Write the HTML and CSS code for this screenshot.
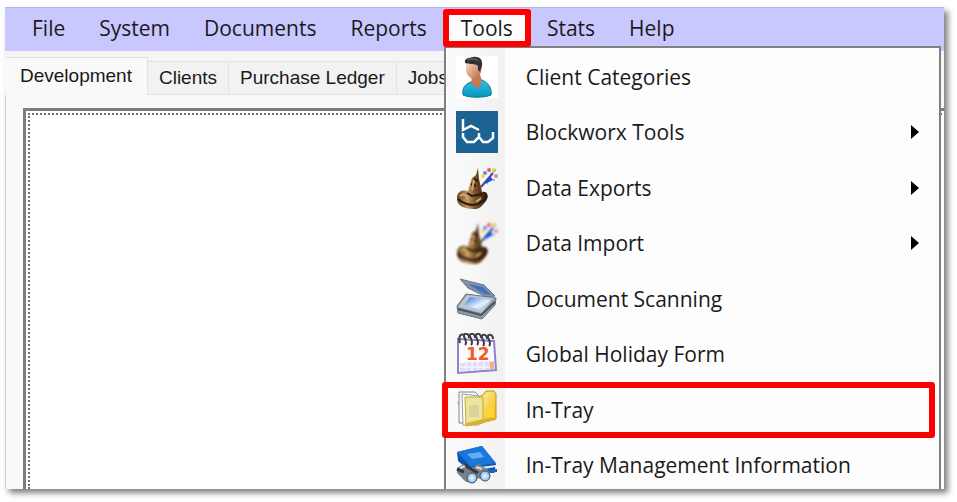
FILE: index.html
```
<!DOCTYPE html>
<html lang="en">
<head>
    <meta charset="UTF-8">
    <meta name="viewport" content="width=device-width, initial-scale=1.0">
    <title>Development</title>
    <link rel="stylesheet" href="styles.css">
</head>
<body>
    <div class="window">
        <nav class="menubar">
            <div class="menu"><button class="menu-button">File</button></div>
            <div class="menu"><button class="menu-button">System</button></div>
            <div class="menu"><button class="menu-button">Documents</button></div>
            <div class="menu"><button class="menu-button">Reports</button></div>
            <div class="menu open">
                <button class="menu-button highlight" aria-expanded="true">Tools</button>
                <div class="dropdown">
                    <button class="item">
                        <svg class="icon" viewBox="0 0 42 42">
                            <defs>
                                <linearGradient id="skin" x1="0" y1="0" x2="1" y2="1">
                                    <stop offset="0" stop-color="#ffe3cf"/>
                                    <stop offset="1" stop-color="#b5633c"/>
                                </linearGradient>
                                <linearGradient id="shirt" x1="0" y1="0" x2="0" y2="1">
                                    <stop offset="0" stop-color="#35bfe6"/>
                                    <stop offset="1" stop-color="#0694bd"/>
                                </linearGradient>
                            </defs>
                            <rect width="42" height="42" fill="#fff"/>
                            <path d="M7 39 C6 32 9 28 15 26 L26 24 C32 27 36 31 35 39 C28 42 13 42 7 39 Z" fill="url(#shirt)" stroke="#087896" stroke-width="1"/>
                            <path d="M16 20 L15 27 L23 33 L26 24 L24 19 Z" fill="#c9794f"/>
                            <path d="M10 6 C14 3 22 3 25 8 C26 14 25 20 20 23 C15 24 10 19 10 14 Z" fill="url(#skin)"/>
                            <path d="M9 7 C8 2 13 2 17 1 C24 0 27 4 26 10 L24 16 L22 14 L22 10 C19 7 14 9 9 7 Z" fill="#303437"/>
                            <path d="M12 4 C16 2 20 3 22 5" fill="none" stroke="#74797c" stroke-width="1"/>
                        </svg>
                        <span>Client Categories</span>
                    </button>
                    <button class="item has-submenu">
                        <svg class="icon" viewBox="0 0 42 42">
                            <rect width="42" height="42" fill="#1c6293"/>
                            <path d="M7 8 V19 L15 15 L23 19 M7 22 V26 L11 31 H18 L23 26 V22 M23 26 L27 31 H32 L37 27 V21" fill="none" stroke="#fff" stroke-width="2.5"/>
                        </svg>
                        <span>Blockworx Tools</span>
                    </button>
                    <button class="item has-submenu">
                        <svg class="icon" viewBox="0 0 42 42">
                            <defs>
                                <linearGradient id="felt" x1="0" y1="0" x2="1" y2="0">
                                    <stop offset="0" stop-color="#69451e"/>
                                    <stop offset="0.35" stop-color="#c59a61"/>
                                    <stop offset="0.6" stop-color="#76502a"/>
                                    <stop offset="1" stop-color="#2b1809"/>
                                </linearGradient>
                                <g id="hat">
                                    <path d="M1 30 C2 23 8 23 12 24 L16 11 L20 8 L22 1 L23 12 L26 25 C32 24 33 29 30 34 C26 39 23 43 17 42 C10 42 0 40 1 30 Z" fill="url(#felt)"/>
                                    <path d="M2 32 C6 36 13 38 17 38 C23 38 28 33 31 29 M11 26 L16 29 L26 27 M18 12 L22 14 M15 17 L20 19" fill="none" stroke="#2d1908" stroke-width="2"/>
                                    <path d="M4 29 C8 26 10 28 12 32 M16 23 L18 13 M20 35 L25 31" fill="none" stroke="#d1a76c" stroke-width="2"/>
                                    <path d="M25 20 L37 6" stroke="#43535f" stroke-width="2"/>
                                    <path d="M29 14 L34 9 L37 13 L33 15 L30 17 Z" fill="#2149e8"/>
                                    <circle cx="29" cy="6" r="2" fill="#6680ff"/>
                                    <circle cx="33" cy="3" r="2" fill="#ff514b"/>
                                    <circle cx="38" cy="3" r="2" fill="#e9d843"/>
                                    <circle cx="40" cy="9" r="2" fill="#ef77e4"/>
                                    <circle cx="38" cy="13" r="1" fill="#62c96b"/>
                                    <circle cx="27" cy="9" r="2" fill="#f3d957"/>
                                    <path d="M34 7 L40 3" stroke="#44bdd5" stroke-width="1"/>
                                </g>
                            </defs>
                            <use href="#hat"/>
                        </svg>
                        <span>Data Exports</span>
                    </button>
                    <button class="item has-submenu">
                        <svg class="icon soft" viewBox="0 0 42 42"><use href="#hat"/></svg>
                        <span>Data Import</span>
                    </button>
                    <button class="item">
                        <svg class="icon" viewBox="0 0 42 42">
                            <defs>
                                <linearGradient id="glass" x1="0" y1="0" x2="1" y2="1">
                                    <stop offset="0" stop-color="#356bd5"/>
                                    <stop offset="0.6" stop-color="#e5f3ff"/>
                                    <stop offset="1" stop-color="#8bbaf0"/>
                                </linearGradient>
                            </defs>
                            <path d="M4 1 L28 7 L39 18 L30 19 L12 10 Z" fill="#8392a4" stroke="#69798b" stroke-width="1"/>
                            <path d="M12 6 L27 9 L35 17 L28 16 Z" fill="#416fc9"/>
                            <path d="M1 28 L10 16 L40 20 L39 27 L26 41 L2 35 Z" fill="#8c98a5" stroke="#687583" stroke-width="1"/>
                            <path d="M2 29 L11 17 L38 20 L26 35 Z" fill="#bcc6d0"/>
                            <path d="M8 27 L14 19 L34 22 L25 32 Z" fill="url(#glass)"/>
                            <path d="M2 31 L25 37 L39 24" fill="none" stroke="#465563" stroke-width="2"/>
                        </svg>
                        <span>Document Scanning</span>
                    </button>
                    <button class="item">
                        <svg class="icon" viewBox="0 0 42 42">
                            <path d="M2 6 L38 8 L40 37 L2 40 Z" fill="#fbfaff" stroke="#8d83c5" stroke-width="2"/>
                            <path d="M4 30 L38 28 L38 36 L4 38 Z" fill="#dedcf8"/>
                            <path d="M10 30 V38 M16 29 V38 M22 29 V37 M28 29 V37 M4 34 H37" stroke="#fff" stroke-width="1"/>
                            <rect x="34" y="29" width="4" height="7" fill="#f5b087"/>
                            <path d="M4 10 C2 3 5 0 8 2 M9 12 C13 8 5 3 9 1 C12 0 13 3 13 5 M15 12 C19 8 11 3 15 1 C18 0 19 3 19 5 M21 12 C25 8 17 3 21 1 C24 0 25 3 25 5 M27 13 C31 9 23 4 27 2 C30 1 31 4 31 6 M33 13 C37 9 29 4 33 2 C36 1 37 4 37 6" fill="none" stroke="#3f3e47" stroke-width="2"/>
                            <text x="10" y="27" class="date">12</text>
                        </svg>
                        <span>Global Holiday Form</span>
                    </button>
                    <button class="item highlight">
                        <svg class="icon" viewBox="0 0 42 42">
                            <defs>
                                <linearGradient id="folder" x1="0" y1="0" x2="1" y2="1">
                                    <stop offset="0" stop-color="#fff3a0"/>
                                    <stop offset="1" stop-color="#edb914"/>
                                </linearGradient>
                            </defs>
                            <path d="M1 13 L6 12 V24 Z" fill="#edbd48"/>
                            <path d="M3 3 L19 3 L22 6 V34 H3 Z" fill="#f7f8f9" stroke="#85898f" stroke-width="1"/>
                            <path d="M6 5 L23 7 V36 H7 Z" fill="#fff" stroke="#9a9da1" stroke-width="1"/>
                            <path d="M23 8 L28 5 L30 2 L38 2 L40 5 V30 L25 34 Z" fill="url(#folder)" stroke="#c39113" stroke-width="1"/>
                            <path d="M28 29 L35 10 L39 28 Z" fill="#ffd237"/>
                            <path d="M9 8 H27 V34 L10 37 Z" fill="#eee59d" stroke="#c5a832" stroke-width="1"/>
                            <path d="M13 16 H23 V28 H13 Z" fill="#d9d3a0"/>
                            <path d="M10 34 L27 30 L40 28 V31 L10 37 Z" fill="#ddb326"/>
                        </svg>
                        <span>In-Tray</span>
                    </button>
                    <button class="item">
                        <svg class="icon" viewBox="0 0 42 42">
                            <defs>
                                <radialGradient id="lens">
                                    <stop offset="0" stop-color="#f1faff"/>
                                    <stop offset="1" stop-color="#83b9ed"/>
                                </radialGradient>
                            </defs>
                            <path d="M1 8 L26 2 L40 20 L38 29 L15 28 L2 17 Z" fill="#0d51ae"/>
                            <path d="M1 8 L26 2 L40 19 L15 23 Z" fill="#1876dc"/>
                            <path d="M11 10 L24 8 L28 13 L16 15 Z" fill="#66adf0"/>
                            <path d="M15 24 L40 21 V23 L17 27 Z" fill="#dceaf8"/>
                            <path d="M15 27 L41 25 V28 L17 31 Z" fill="#1b65c2"/>
                            <path d="M1 24 L9 19 L16 25 L22 20 L31 25 L34 30 L30 37 L22 34 L18 39 L10 38 L1 29 Z" fill="#7b8087"/>
                            <path d="M1 25 L8 28 M13 24 L22 29 M8 20 L13 24" stroke="#303842" stroke-width="3"/>
                            <path d="M4 24 L9 22 M20 23 L26 25" stroke="#d9dde1" stroke-width="2"/>
                            <circle cx="16" cy="34" r="5" fill="url(#lens)" stroke="#46515e" stroke-width="1"/>
                            <circle cx="29" cy="32" r="5" fill="url(#lens)" stroke="#46515e" stroke-width="1"/>
                        </svg>
                        <span>In-Tray Management Information</span>
                    </button>
                </div>
            </div>
            <div class="menu"><button class="menu-button">Stats</button></div>
            <div class="menu"><button class="menu-button">Help</button></div>
        </nav>

        <div class="tabs" role="tablist">
            <button class="tab active" role="tab" aria-selected="true">Development</button>
            <button class="tab" role="tab">Clients</button>
            <button class="tab" role="tab">Purchase Ledger</button>
            <button class="tab" role="tab">Jobs</button>
        </div>
        <main class="page">
            <div class="panel"></div>
        </main>
    </div>
</body>
</html>
```

FILE: styles.css
```
:root {
    --menu-color: #c8c8ff;
    --highlight-color: #ff0000;
    --border-color: #808080;
    --text-color: #1a1a1a;
}

* {
    margin: 0;
    padding: 0;
    box-sizing: border-box;
}

body {
    display: flex;
    height: 100vh;
    padding: 7px 13px 13px 5px;
    background-color: #fff;
    color: var(--text-color);
    font-family: "Open Sans", "Noto Sans", sans-serif;
    font-size: 21px;
    line-height: 28px;
}

button {
    border: none;
    background: none;
    color: inherit;
    font: inherit;
    text-align: left;
    white-space: nowrap;
}

.window {
    flex: 1;
    display: flex;
    flex-direction: column;
    min-width: 0;
    overflow: hidden;
    background-color: #f9f9f9;
    box-shadow: 4px 4px 6px rgba(0, 0, 0, 0.5);
}

/* Menu bar */
.menubar {
    display: flex;
    padding: 3px 0 5px 10px;
    background-color: var(--menu-color);
    box-shadow: inset 0 1px #b8b8e4;
}

.menu {
    position: relative;
}

.menu-button {
    display: block;
    height: 36px;
    padding: 0 17px;
}

.open .menu-button {
    background-color: #fdfdfd;
}

.highlight {
    position: relative;
}

.highlight::after {
    content: "";
    position: absolute;
    inset: -1px;
    z-index: 2;
    border: 6px solid var(--highlight-color);
    border-radius: 3px;
}

.open .menu-button {
    z-index: 2;
}

/* Drop-down */
.dropdown {
    position: absolute;
    top: 100%;
    left: 0;
    z-index: 1;
    display: grid;
    grid-auto-rows: 1fr;
    width: 497px;
    height: 450px;
    padding: 1px 0;
    border: 2px solid var(--border-color);
    background: linear-gradient(to right, #fbfbfb, #f1f1f1) 1px 0 / 58px 100% no-repeat #fdfdfd;
}

.item {
    display: flex;
    align-items: center;
    gap: 28px;
    padding: 0 20px 0 10px;
}

.item.highlight::after {
    inset: 0 4px 0 -4px;
}

.has-submenu::after {
    content: "";
    margin-left: auto;
    border: 7px solid transparent;
    border-left: 8px solid #000;
    border-right: none;
}

.icon {
    width: 42px;
    height: 42px;
}

.soft {
    filter: blur(1px);
}

.date {
    fill: #f45b16;
    font-family: "DejaVu Sans", sans-serif;
    font-size: 17px;
    font-weight: bold;
}

/* Tabs */
.tabs {
    display: flex;
    align-items: flex-end;
    height: 44px;
    padding-top: 6px;
    background-color: #f5f5f5;
    font-family: "Liberation Sans", Arial, sans-serif;
    font-size: 19px;
}

.tab {
    height: 34px;
    padding: 0 11px;
    border: 1px solid #e2e2e2;
    border-left: none;
    background-color: #f2f2f2;
}

.tab.active {
    align-self: stretch;
    height: auto;
    padding: 0 15px 2px;
    border-bottom: none;
    background-color: #f9f9f9;
}

.page {
    flex: 1;
    display: flex;
    padding: 13px 0 0 17px;
    border-left: 1px solid #d0d0d0;
}

.panel {
    flex: 1;
    padding: 2px;
    border: 3px solid #7c7d80;
    border-right: none;
    border-bottom: none;
    background-color: #fff;
}

.panel::before {
    content: "";
    display: block;
    height: 100%;
    border-top: 2px dotted #707070;
    border-left: 2px dotted #707070;
}
```
